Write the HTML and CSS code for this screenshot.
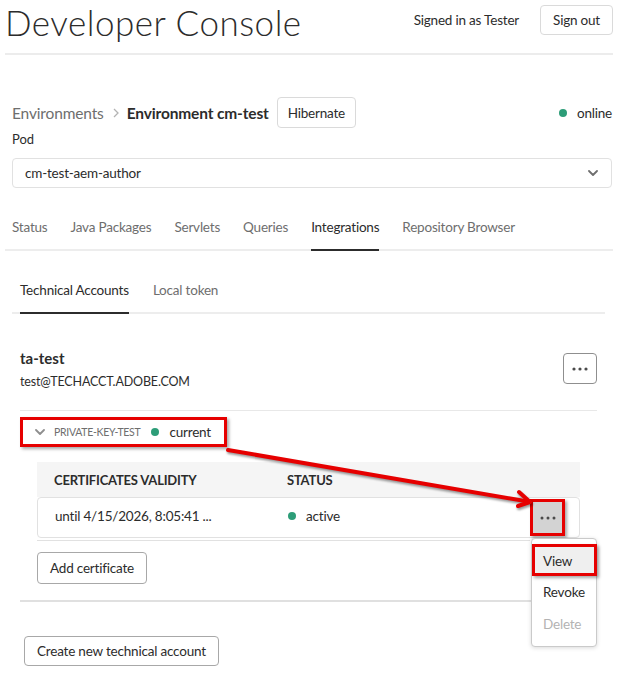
FILE: index.html
```html
<!DOCTYPE html>
<html>
<head>
<meta charset="utf-8">
<title>Developer Console</title>
<link rel="stylesheet" href="styles.css">
</head>
<body>
<div class="page">
  <header class="header">
    <h1 class="title">Developer Console</h1>
    <div class="user">
      <span class="signed">Signed in as Tester</span>
      <button class="btn">Sign out</button>
    </div>
  </header>

  <section class="env">
    <div class="crumbs">
      <span class="crumb">Environments</span>
      <svg class="crumb-sep" width="6" height="10" viewBox="0 0 6 10"><path d="M1 1 L5 5 L1 9" fill="none" stroke="#b3b3b3" stroke-width="1.3"/></svg>
      <span class="crumb-current">Environment cm-test</span>
      <button class="btn hibernate">Hibernate</button>
      <span class="status"><span class="dot"></span>online</span>
    </div>
    <div class="label">Pod</div>
    <div class="select">
      <span>cm-test-aem-author</span>
      <svg width="10" height="6" viewBox="0 0 10 6"><path d="M1 1 L5 5 L9 1" fill="none" stroke="#6e6e6e" stroke-width="1.8" stroke-linecap="round" stroke-linejoin="round"/></svg>
    </div>
  </section>

  <nav class="tabs main-tabs">
    <span class="tab">Status</span>
    <span class="tab">Java Packages</span>
    <span class="tab">Servlets</span>
    <span class="tab">Queries</span>
    <span class="tab active">Integrations</span>
    <span class="tab">Repository Browser</span>
  </nav>

  <section class="panel">
    <nav class="tabs sub-tabs">
      <span class="tab active">Technical Accounts</span>
      <span class="tab">Local token</span>
    </nav>

    <div class="account">
      <div class="account-head">
        <div class="account-info">
          <div class="acc-name">ta-test</div>
          <div class="acc-mail">test@TECHACCT.ADOBE.COM</div>
        </div>
        <button class="icon-btn">
          <svg width="16" height="4" viewBox="0 0 16 4"><circle cx="2" cy="2" r="1.6" fill="#4b4b4b"/><circle cx="8" cy="2" r="1.6" fill="#4b4b4b"/><circle cx="14" cy="2" r="1.6" fill="#4b4b4b"/></svg>
        </button>
      </div>

      <div class="key-row">
        <span class="key mark">
          <svg class="key-chev" width="10" height="6" viewBox="0 0 10 6"><path d="M1 1 L5 5 L9 1" fill="none" stroke="#8e8e8e" stroke-width="1.8" stroke-linecap="round" stroke-linejoin="round"/></svg>
          <span class="key-name">PRIVATE-KEY-TEST</span>
          <span class="dot"></span>
          <span class="key-state">current</span>
        </span>
      </div>

      <div class="certs">
        <div class="certs-head">
          <span class="col-validity">CERTIFICATES VALIDITY</span>
          <span class="col-status">STATUS</span>
        </div>
        <div class="cert-row">
          <span class="col-validity">until 4/15/2026, 8:05:41 ...</span>
          <span class="col-status"><span class="dot"></span>active</span>
          <span class="row-action">
            <button class="icon-btn row-btn mark">
              <svg width="16" height="4" viewBox="0 0 16 4"><circle cx="2" cy="2" r="1.5" fill="#4b4b4b"/><circle cx="8" cy="2" r="1.5" fill="#4b4b4b"/><circle cx="14" cy="2" r="1.5" fill="#4b4b4b"/></svg>
            </button>
            <div class="menu">
              <div class="menu-item selected mark">View</div>
              <div class="menu-item">Revoke</div>
              <div class="menu-item disabled">Delete</div>
            </div>
          </span>
        </div>
        <div class="certs-foot"></div>
      </div>

      <button class="btn add-btn">Add certificate</button>
    </div>

    <div class="divider"></div>

    <button class="btn create-btn">Create new technical account</button>
  </section>

  <svg class="arrow" width="618" height="675" viewBox="0 0 618 675">
    <g fill="none" stroke="#e60000" stroke-width="4" stroke-linecap="round" stroke-linejoin="round">
      <path d="M228 450 L528 501.5"/>
      <path d="M519 492 L530 502 L518 506"/>
    </g>
  </svg>
</div>
</body>
</html>
```

FILE: styles.css
```css
* { box-sizing: border-box; }

body {
  margin: 0;
  background: #fff;
  color: #2c2c2c;
  font-family: Lato, "Liberation Sans", sans-serif;
}

.page {
  position: relative;
  width: 618px;
  height: 675px;
  overflow: hidden;
  padding: 0 5px;
}

/* header */
.header {
  display: flex;
  justify-content: space-between;
  align-items: flex-start;
  height: 55px;
  border-bottom: 2px solid #ececec;
}
.title {
  margin: 0 0 0 0;
  font-size: 35px;
  font-weight: 300;
  letter-spacing: 0.5px;
  line-height: 44px;
  color: #2c2c2c;
}
.user {
  display: flex;
  align-items: center;
  gap: 21px;
  margin-top: 5px;
}
.signed { font-size: 13.5px; letter-spacing: -0.2px; }

.btn {
  font-family: inherit;
  font-size: 13.5px;
  letter-spacing: -0.2px;
  color: #2c2c2c;
  background: #fff;
  border: 1px solid #dadada;
  border-radius: 4px;
  padding: 0 12px;
  height: 30px;
}

/* environment */
.env { padding: 42px 1px 0 7px; }
.crumbs {
  display: flex;
  align-items: center;
  height: 31px;
}
.crumb { font-size: 15.5px; letter-spacing: -0.15px; color: #6e6e6e; }
.crumb-sep { margin: 0 8px 0 9px; }
.crumb-current { font-size: 15.5px; letter-spacing: -0.15px; font-weight: 700; }
.hibernate { height: 31px; margin-left: 8px; padding: 0 10px; }
.status {
  margin-left: auto;
  display: flex;
  align-items: center;
  font-size: 13.5px;
  letter-spacing: -0.2px;
}
.dot {
  display: inline-block;
  width: 8px;
  height: 8px;
  border-radius: 50%;
  background: #2d9d78;
  margin-right: 10px;
}
.label {
  font-size: 13px;
  line-height: 20px;
  margin-top: 1px;
}
.select {
  margin-top: 9px;
  height: 30px;
  border: 1px solid #e1e1e1;
  border-radius: 4px;
  display: flex;
  align-items: center;
  justify-content: space-between;
  padding: 0 13px 0 12px;
  font-size: 13.5px;
  letter-spacing: -0.2px;
}

/* tabs */
.tabs {
  display: flex;
  gap: 23px;
  border-bottom: 2px solid #ededed;
}
.tab {
  font-size: 13.5px;
  letter-spacing: -0.2px;
  color: #6e6e6e;
  line-height: 38px;
  padding-bottom: 3px;
  border-bottom: 2px solid transparent;
  margin-bottom: -2px;
}
.tab.active {
  color: #2c2c2c;
  border-bottom-color: #2c2c2c;
}
.main-tabs {
  margin-top: 20px;
  padding-left: 7px;
}

.panel { padding: 0 8px 0 7px; }
.sub-tabs {
  margin-top: 19px;
  padding-left: 8px;
  gap: 24px;
}
.sub-tabs .tab { line-height: 40px; padding-bottom: 2px; }

/* account */
.account { padding: 0 8px; }
.account-head {
  display: flex;
  justify-content: space-between;
  align-items: flex-start;
  padding-top: 34px;
  padding-bottom: 18px;
  border-bottom: 1px solid #e8e8e8;
}
.acc-name { font-size: 15px; font-weight: 700; line-height: 20px; }
.acc-mail { font-size: 12.5px; letter-spacing: -0.15px; line-height: 20px; margin-top: 4px; }

.icon-btn {
  width: 34px;
  height: 31px;
  border: 1px solid #8f8f8f;
  border-radius: 4px;
  background: #fff;
  display: flex;
  align-items: center;
  justify-content: center;
  padding: 0;
  margin-top: 5px;
}

.mark {
  border: 3px solid #e60000 !important;
  box-shadow: 2px 2px 3px rgba(0, 0, 0, 0.35);
}

.key-row { margin-top: 6px; }
.key {
  display: inline-flex;
  align-items: center;
  width: 207px;
  height: 30px;
  padding-left: 12px;
}
.key-chev { margin-right: 9px; }
.key-name {
  font-size: 10.5px;
  letter-spacing: -0.3px;
  color: #6e6e6e;
  margin-right: 11px;
}
.key-state { font-size: 13.5px; letter-spacing: -0.2px; }

/* certificates */
.certs {
  margin: 15px 17px 0 17px;
}
.certs-head {
  display: flex;
  align-items: center;
  height: 35px;
  background: #f5f5f5;
  padding-left: 17px;
  font-size: 13px;
  letter-spacing: -0.2px;
  font-weight: 700;
}
.col-validity { width: 233px; }
.col-status { display: flex; align-items: center; }
.cert-row {
  display: flex;
  align-items: center;
  height: 41px;
  border: 1px solid #e1e1e1;
  border-radius: 4px;
  padding-left: 17px;
  padding-bottom: 3px;
  font-size: 13.5px;
  letter-spacing: -0.2px;
}
.cert-row .col-status { width: 242px; }
.row-action { position: relative; margin-top: 3px; }
.row-btn {
  margin-top: 0;
  background: #d3d3d3;
  border-radius: 0;
  height: 37px;
  width: 35px;
}
.certs-foot {
  height: 3px;
  border-bottom: 1px solid #e1e1e1;
  margin-right: 50px;
}

.menu {
  position: absolute;
  top: calc(100% + 2px);
  left: 1px;
  width: 66px;
  padding: 5px 0 6px;
  background: #fff;
  border: 1px solid #cacaca;
  border-radius: 4px;
  box-shadow: 0 1px 4px rgba(0, 0, 0, 0.15);
  z-index: 2;
}
.menu-item {
  font-size: 13.5px;
  letter-spacing: -0.2px;
  line-height: 32px;
  padding-left: 11px;
}
.menu-item.selected {
  background: #efefef;
  line-height: 24px;
  padding: 2px 0 0 8px;
  margin: 0 -1px 0 0;
}
.menu-item.disabled { color: #b3b3b3; }

.add-btn {
  margin: 11px 0 0 17px;
  height: 32px;
  border-color: #a8a8a8;
}

.divider {
  margin: 16px 8px 0 8px;
  border-top: 2px solid #e0e0e0;
}

.create-btn {
  margin: 34px 0 0 12px;
  border-color: #a8a8a8;
}

.arrow {
  position: absolute;
  top: 0;
  left: 0;
  pointer-events: none;
  filter: drop-shadow(1px 2px 1px rgba(0, 0, 0, 0.4));
}
```
